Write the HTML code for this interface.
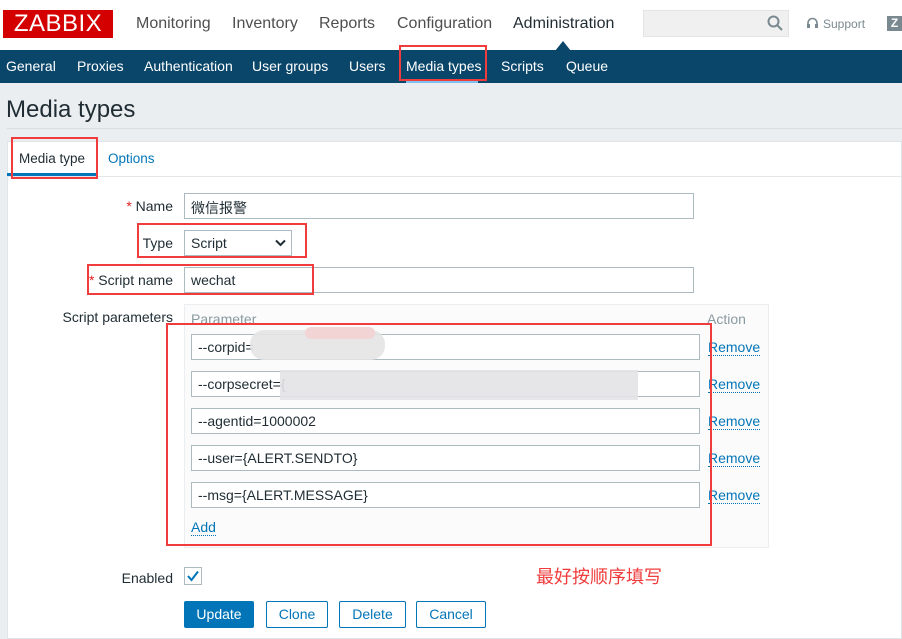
<!DOCTYPE html>
<html><head><meta charset="utf-8"><style>
*{margin:0;padding:0;box-sizing:border-box}
body{width:902px;height:639px;overflow:hidden;background:#ebeef0;font-family:"Liberation Sans","Noto Sans CJK SC",sans-serif;position:relative;color:#1f2c33}
.a{position:absolute;white-space:nowrap}
.hdr{left:0;top:0;width:902px;height:50px;background:#fff}
.nav{left:0;top:50px;width:902px;height:33px;background:#0a466a}
.top{font-size:16px;color:#4f4f4f;top:15px}
.sub{font-size:14px;color:#fff;top:58px}
.red{position:absolute;border:2px solid #f03c3c}
.inp{position:absolute;background:#fff;border:1px solid #acbbc2;height:26px;font-size:14px;padding:4px 6px;color:#1f2c33}
.lbl{font-size:14px;color:#1f2c33;text-align:right}
.rm{font-size:14px;color:#0275b8;border-bottom:1px dotted #0275b8;line-height:15px}
.btn{position:absolute;top:601px;height:27px;border:1px solid #0275b8;color:#0275b8;background:#fff;font-size:14px;text-align:center;line-height:25px;border-radius:2px}
</style></head><body>
<div class="a hdr"></div>
<div class="a" style="left:3px;top:10px;width:110px;height:28px;background:#d40000;color:#fff;font-size:24px;line-height:28px;text-align:center;letter-spacing:0.5px">ZABBIX</div>
<div class="a top" style="left:136px">Monitoring</div>
<div class="a top" style="left:232px">Inventory</div>
<div class="a top" style="left:319px">Reports</div>
<div class="a top" style="left:397px">Configuration</div>
<div class="a top" style="left:513px;color:#1f2c33">Administration</div>
<div class="a" style="left:643px;top:10px;width:146px;height:27px;background:#f0f0f0;border:1px solid #e4e4e4"></div>
<svg class="a" style="left:766px;top:14px" width="18" height="18" viewBox="0 0 18 18"><circle cx="7.5" cy="7.5" r="5" fill="none" stroke="#7a8990" stroke-width="2"/><path d="M11 11l5 5" stroke="#7a8990" stroke-width="2"/></svg>
<svg class="a" style="left:806px;top:17px" width="13" height="13" viewBox="0 0 13 13"><path d="M2 9V6a4.5 4.5 0 0 1 9 0v3" fill="none" stroke="#7a8990" stroke-width="1.6"/><rect x="1" y="7" width="3" height="4" fill="#7a8990"/><rect x="9" y="7" width="3" height="4" fill="#7a8990"/></svg>
<div class="a" style="left:823px;top:17px;font-size:12px;color:#7a8990">Support</div>
<div class="a" style="left:887px;top:16px;width:15px;height:15px;background:#7a8990;color:#fff;font-size:12px;font-weight:bold;text-align:center;line-height:15px">Z</div>
<svg class="a" style="left:555px;top:41px" width="16" height="10"><path d="M0 10L8 0L16 10z" fill="#0a466a"/></svg>
<div class="a nav"></div>
<div class="a sub" style="left:6px">General</div>
<div class="a sub" style="left:77px">Proxies</div>
<div class="a sub" style="left:144px">Authentication</div>
<div class="a sub" style="left:252px">User groups</div>
<div class="a sub" style="left:349px">Users</div>
<div class="a sub" style="left:406px">Media types</div>
<div class="a" style="left:406px;top:80px;width:72px;height:3px;background:#7ec0ee"></div>
<div class="a sub" style="left:501px">Scripts</div>
<div class="a sub" style="left:566px">Queue</div>
<div class="red" style="left:399px;top:45px;width:88px;height:36px"></div>
<div class="a" style="left:6px;top:96px;font-size:24px;color:#1f2c33">Media types</div>
<div class="a" style="left:7px;top:128px;width:895px;height:1px;background:#d9dde0"></div>
<div class="a" style="left:7px;top:141px;width:895px;height:498px;background:#fff;border:1px solid #dfe4e7"></div>
<div class="a" style="left:8px;top:176px;width:894px;height:1px;background:#e3e6e8"></div>
<div class="a" style="left:19px;top:151px;font-size:13.5px;color:#1f2c33">Media type</div>
<div class="a" style="left:7px;top:173px;width:90px;height:3px;background:#0275b8"></div>
<div class="a" style="left:108px;top:151px;font-size:13.5px;color:#0275b8">Options</div>
<div class="red" style="left:11px;top:137px;width:87px;height:42px"></div>
<div class="a lbl" style="left:100px;top:198px;width:73px"><span style="color:#e02020">*</span> Name</div>
<div class="inp" style="left:184px;top:193px;width:510px">微信报警</div>
<div class="a lbl" style="left:100px;top:235px;width:73px">Type</div>
<div class="inp" style="left:184px;top:230px;width:108px">Script</div>
<svg class="a" style="left:275px;top:239px" width="11" height="8"><path d="M1 1.5l4.5 4.5L10 1.5" fill="none" stroke="#1f2c33" stroke-width="2"/></svg>
<div class="red" style="left:137px;top:223px;width:170px;height:35px"></div>
<div class="a lbl" style="left:80px;top:272px;width:93px"><span style="color:#e02020">*</span> Script name</div>
<div class="inp" style="left:184px;top:267px;width:510px">wechat</div>
<div class="red" style="left:87px;top:264px;width:227px;height:31px"></div>
<div class="a lbl" style="left:40px;top:309px;width:133px">Script parameters</div>
<div class="a" style="left:184px;top:304px;width:585px;height:244px;background:#fbfbfb;border:1px solid #ebeef0"></div>
<div class="a" style="left:191px;top:311px;font-size:14px;color:#8a9aa2">Parameter</div>
<div class="a" style="left:707px;top:311px;font-size:14px;color:#8a9aa2">Action</div>
<div class="inp" style="left:191px;top:334px;width:509px">--corpid=</div>
<div class="a" style="left:250px;top:330px;width:135px;height:30px;background:#e4e4e6;border-radius:14px;opacity:.9"></div>
<div class="a" style="left:305px;top:327px;width:70px;height:12px;background:#f3d4d4;border-radius:6px"></div>
<div class="inp" style="left:191px;top:371px;width:509px">--corpsecret={</div>
<div class="a" style="left:280px;top:370px;width:358px;height:30px;background:#e3e3e6;opacity:.9"></div>
<div class="inp" style="left:191px;top:408px;width:509px">--agentid=1000002</div>
<div class="inp" style="left:191px;top:445px;width:509px">--user={ALERT.SENDTO}</div>
<div class="inp" style="left:191px;top:482px;width:509px">--msg={ALERT.MESSAGE}</div>
<div class="a rm" style="left:708px;top:340px">Remove</div>
<div class="a rm" style="left:708px;top:377px">Remove</div>
<div class="a rm" style="left:708px;top:414px">Remove</div>
<div class="a rm" style="left:708px;top:451px">Remove</div>
<div class="a rm" style="left:708px;top:488px">Remove</div>
<div class="a rm" style="left:191px;top:520px">Add</div>
<div class="red" style="left:166px;top:323px;width:546px;height:223px"></div>
<div class="a lbl" style="left:80px;top:570px;width:93px">Enabled</div>
<div class="a" style="left:184px;top:567px;width:18px;height:18px;border:1px solid #acbbc2;background:#fff"></div>
<svg class="a" style="left:186px;top:569px" width="14" height="14"><path d="M2 7l3.5 4L12 2.5" fill="none" stroke="#0275b8" stroke-width="2"/></svg>
<div class="a" style="left:536px;top:563px;font-size:18px;color:#f03c3c">最好按顺序填写</div>
<div class="btn" style="left:184px;width:70px;background:#0275b8;color:#fff">Update</div>
<div class="btn" style="left:266px;width:62px">Clone</div>
<div class="btn" style="left:339px;width:67px">Delete</div>
<div class="btn" style="left:416px;width:70px">Cancel</div>
</body></html>
